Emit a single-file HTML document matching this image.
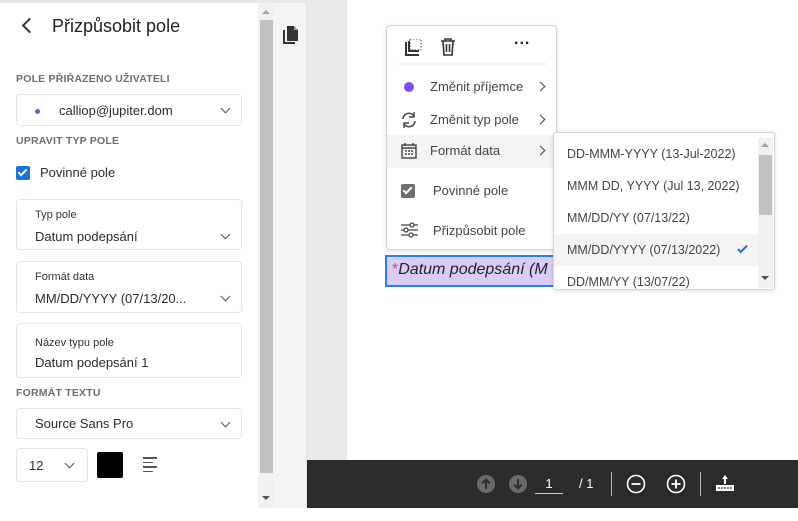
<!DOCTYPE html>
<html><head><meta charset="utf-8"><style>
*{box-sizing:border-box;margin:0;padding:0}
body{width:798px;height:521px;overflow:hidden;background:#fff;font-family:"Liberation Sans",sans-serif;color:#2c2c2c;position:relative}
.abs{position:absolute}
.lbl{font-size:10.5px;font-weight:bold;color:#6e6e6e;letter-spacing:.2px}
.box{position:absolute;left:16px;width:226px;border:1px solid #e6e6e6;border-radius:4px;background:#fff}
.chev{position:absolute;right:12px;width:7px;height:7px;border-right:1.5px solid #555;border-bottom:1.5px solid #555;transform:rotate(45deg)}
.small{font-size:11px;color:#333}
.val{font-size:13px;color:#2c2c2c}
.mi{position:absolute;left:0;width:170px;height:32px;font-size:13px;color:#444}
.mi span{position:absolute;left:43px;top:8px}
.arr{position:absolute;left:150px;top:12px;width:7px;height:7px;border-right:1.6px solid #444;border-top:1.6px solid #444;transform:rotate(45deg)}
.so{position:absolute;left:0;width:204px;height:32px;font-size:12.5px;color:#444}
.so span{position:absolute;left:13px;top:9px}
</style></head><body>
<div class="abs" style="left:0;top:0;width:346px;height:3px;background:#e8e8e8"></div>
<div class="abs" style="left:24px;top:20px;width:11px;height:11px;border-left:2px solid #333;border-bottom:2px solid #333;transform:rotate(45deg)"></div>
<div class="abs" style="left:52px;top:16px;font-size:18px;color:#222">Přizpůsobit pole</div>
<div class="abs lbl" style="left:16px;top:73px">POLE PŘIŘAZENO UŽIVATELI</div>
<div class="box" style="top:94px;height:32px">
 <div class="abs" style="left:18px;top:14px;width:5px;height:5px;border-radius:50%;background:#7b4fe8"></div>
 <div class="abs val" style="left:42px;top:8px">calliop@jupiter.dom</div>
 <div class="chev" style="top:10px"></div></div>
<div class="abs lbl" style="left:16px;top:135px">UPRAVIT TYP POLE</div>
<div class="abs" style="left:16px;top:166px;width:14px;height:14px;background:#1473e6;border-radius:2px">
 <div class="abs" style="left:4px;top:1px;width:5px;height:9px;border-right:2px solid #fff;border-bottom:2px solid #fff;transform:rotate(45deg)"></div></div>
<div class="abs val" style="left:40px;top:165px">Povinné pole</div>
<div class="box" style="top:199px;height:51px"><div class="abs small" style="left:18px;top:9px">Typ pole</div><div class="abs val" style="left:18px;top:29px">Datum podepsání</div><div class="chev" style="top:31px"></div></div>
<div class="box" style="top:261px;height:52px"><div class="abs small" style="left:18px;top:9px">Formát data</div><div class="abs val" style="left:18px;top:29px">MM/DD/YYYY (07/13/20...</div><div class="chev" style="top:31px"></div></div>
<div class="box" style="top:323px;height:55px"><div class="abs small" style="left:18px;top:13px">Název typu pole</div><div class="abs val" style="left:18px;top:31px">Datum podepsání 1</div></div>
<div class="abs lbl" style="left:16px;top:387px">FORMÁT TEXTU</div>
<div class="box" style="top:408px;height:31px"><div class="abs val" style="left:18px;top:7px">Source Sans Pro</div><div class="chev" style="top:10px"></div></div>
<div class="abs" style="left:16px;top:448px;width:72px;height:34px;border:1px solid #e6e6e6;border-radius:4px"><div class="abs val" style="left:12px;top:9px">12</div><div class="chev" style="top:11px;right:14px"></div></div>
<div class="abs" style="left:97px;top:452px;width:26px;height:26px;background:#000;border-radius:2px"></div>
<div class="abs" style="left:143px;top:457px;width:14px">
 <div style="height:1.5px;background:#555;margin-bottom:3px"></div><div style="height:1.5px;background:#555;width:10px;margin-bottom:3px"></div><div style="height:1.5px;background:#555;margin-bottom:3px"></div><div style="height:1.5px;background:#555;width:10px"></div></div>
<div class="abs" style="left:258px;top:3px;width:16px;height:505px;background:#f1f1f1"></div>
<div class="abs" style="left:260px;top:20px;width:13px;height:453px;background:#c1c1c1"></div>
<div class="abs" style="left:262px;top:10px;border:4px solid transparent;border-bottom:4px solid #a3a3a3;border-top:0"></div>
<div class="abs" style="left:262px;top:496px;border:4px solid transparent;border-top:4px solid #505050;border-bottom:0"></div>
<div class="abs" style="left:274px;top:3px;width:33px;height:505px;background:#f4f4f4;border-right:1px solid #e4e4e4"></div>
<svg class="abs" style="left:283px;top:26px" width="16" height="18" viewBox="0 0 16 18"><path d="M0 4h2v12h10v2H0z" fill="#333"/><path d="M4 0h7l4 4v11H4z" fill="#333"/><path d="M11 0v4h4" fill="#999"/></svg>
<div class="abs" style="left:307px;top:0;width:40px;height:460px;background:#e9e9e9"></div>
<div class="abs" style="left:307px;top:460px;width:491px;height:48px;background:#2c2c2c"></div>
<svg class="abs" style="left:477px;top:475px" width="18" height="18"><circle cx="9" cy="9" r="9" fill="#6a6a6a"/><path d="M9 14V4.5M5 8.5l4-4 4 4" stroke="#2c2c2c" stroke-width="2" fill="none"/></svg>
<svg class="abs" style="left:509px;top:475px" width="18" height="18"><circle cx="9" cy="9" r="9" fill="#6a6a6a"/><path d="M9 4v9.5M5 9.5l4 4 4-4" stroke="#2c2c2c" stroke-width="2" fill="none"/></svg>
<div class="abs" style="left:535px;top:476px;width:28px;text-align:center;color:#fff;font-size:13px;border-bottom:1px solid #ccc;padding-bottom:2px">1</div>
<div class="abs" style="left:579px;top:476px;color:#fff;font-size:13px">/ 1</div>
<div class="abs" style="left:611px;top:472px;width:1px;height:24px;background:#bbb"></div>
<svg class="abs" style="left:626px;top:474px" width="20" height="20"><circle cx="10" cy="10" r="8.5" stroke="#fff" stroke-width="1.6" fill="none"/><path d="M5.5 10h9" stroke="#fff" stroke-width="1.8"/></svg>
<svg class="abs" style="left:666px;top:474px" width="20" height="20"><circle cx="10" cy="10" r="8.5" stroke="#fff" stroke-width="1.6" fill="none"/><path d="M5.5 10h9M10 5.5v9" stroke="#fff" stroke-width="1.8"/></svg>
<div class="abs" style="left:700px;top:472px;width:1px;height:24px;background:#bbb"></div>
<svg class="abs" style="left:715px;top:475px" width="20" height="18"><path d="M10 0l-3 4h2v5h2V4h2z" fill="#fff"/><rect x="1" y="10" width="18" height="6" fill="#fff"/><path d="M4 12v2M7 12v2M10 12v2M13 12v2M16 12v2" stroke="#2c2c2c" stroke-width="1.2"/></svg>
<div class="abs" style="left:385px;top:255px;width:175px;height:32px;background:#d8cdf8;border:2px solid #2680eb"></div>
<div class="abs" style="left:392px;top:261px;font-size:16px;font-style:italic;color:#222;white-space:nowrap"><span style="color:#e34850;font-style:normal">*</span>Datum podepsání (M</div>
<div class="abs" style="left:386px;top:25px;width:171px;height:225px;background:#fff;border:1px solid #d6d6d6;border-radius:4px;box-shadow:0 1px 4px rgba(0,0,0,.15)">
 <svg class="abs" style="left:18px;top:13px" width="17" height="17"><rect x="0" y="3" width="2" height="14" fill="#333"/><rect x="0" y="15" width="14" height="2" fill="#333"/><rect x="5" y="0" width="11" height="11" fill="none" stroke="#444" stroke-dasharray="1.5 1.5"/><rect x="3" y="2" width="2" height="11" fill="#333"/><rect x="3" y="11" width="11" height="2" fill="#333"/></svg>
 <svg class="abs" style="left:53px;top:12px" width="16" height="18"><path d="M1 3h14M5 3V1h6v2M3 3l1 14h8l1-14M6.5 6v8M9.5 6v8" stroke="#333" stroke-width="1.6" fill="none"/></svg>
 <div class="abs" style="left:127px;top:5px;font-size:16px;font-weight:bold;color:#222;letter-spacing:1px">...</div>
 <div class="abs" style="left:12px;top:37px;width:147px;height:2px;background:#eee"></div>
 <div class="mi" style="top:45px"><div class="abs" style="left:17px;top:11px;width:10px;height:10px;border-radius:50%;background:#7c4dff"></div><span>Změnit příjemce</span><div class="arr"></div></div>
 <div class="mi" style="top:78px"><svg class="abs" style="left:14px;top:8px" width="16" height="16"><path d="M2 7a6 6 0 0 1 11-3M14 9a6 6 0 0 1-11 3" stroke="#444" stroke-width="1.6" fill="none"/><path d="M13 0v5H8M3 16v-5h5" stroke="#444" stroke-width="1.4" fill="none"/></svg><span>Změnit typ pole</span><div class="arr"></div></div>
 <div class="mi" style="top:109px;background:#f4f4f4;height:33px"><svg class="abs" style="left:14px;top:8px" width="16" height="16"><rect x="1" y="2" width="14" height="13" fill="none" stroke="#444" stroke-width="1.4"/><path d="M1 5h14M4 0v3M12 0v3" stroke="#444" stroke-width="1.4"/><path d="M4 8h2M7 8h2M10 8h2M4 11h2M7 11h2M10 11h2" stroke="#444" stroke-width="1.5"/></svg><span>Formát data</span><div class="arr"></div></div>
 <div class="mi" style="top:149px"><div class="abs" style="left:14px;top:9px;width:14px;height:14px;background:#6e6e6e;border-radius:2px"><div class="abs" style="left:4px;top:1px;width:5px;height:9px;border-right:2px solid #fff;border-bottom:2px solid #fff;transform:rotate(45deg)"></div></div><span style="left:46px">Povinné pole</span></div>
 <div class="mi" style="top:189px"><svg class="abs" style="left:14px;top:7px" width="17" height="16"><path d="M0 3h17M0 8h17M0 13h17" stroke="#444" stroke-width="1.3"/><circle cx="11" cy="3" r="2" fill="#fff" stroke="#444" stroke-width="1.3"/><circle cx="5" cy="8" r="2" fill="#fff" stroke="#444" stroke-width="1.3"/><circle cx="10" cy="13" r="2" fill="#fff" stroke="#444" stroke-width="1.3"/></svg><span style="left:46px">Přizpůsobit pole</span></div>
</div>
<div class="abs" style="left:553px;top:132px;width:222px;height:158px;background:#fff;border:1px solid #d6d6d6;border-radius:3px;box-shadow:0 1px 4px rgba(0,0,0,.15);overflow:hidden">
 <div class="so" style="top:5px"><span>DD-MMM-YYYY (13-Jul-2022)</span></div>
 <div class="so" style="top:37px"><span>MMM DD, YYYY (Jul 13, 2022)</span></div>
 <div class="so" style="top:69px"><span>MM/DD/YY (07/13/22)</span></div>
 <div class="so" style="top:101px;background:#f4f4f4"><span>MM/DD/YYYY (07/13/2022)</span><div class="abs" style="left:186px;top:9px;width:5px;height:10px;border-right:2px solid #1473e6;border-bottom:2px solid #1473e6;transform:rotate(45deg)"></div></div>
 <div class="so" style="top:133px"><span>DD/MM/YY (13/07/22)</span></div>
 <div class="abs" style="left:204px;top:5px;width:15px;height:150px;background:#f1f1f1"></div>
 <div class="abs" style="left:205px;top:22px;width:13px;height:60px;background:#c1c1c1"></div>
 <div class="abs" style="left:207px;top:10px;border:4px solid transparent;border-bottom:4px solid #a3a3a3;border-top:0"></div>
 <div class="abs" style="left:207px;top:143px;border:4px solid transparent;border-top:4px solid #505050;border-bottom:0"></div>
</div>
</body></html>
